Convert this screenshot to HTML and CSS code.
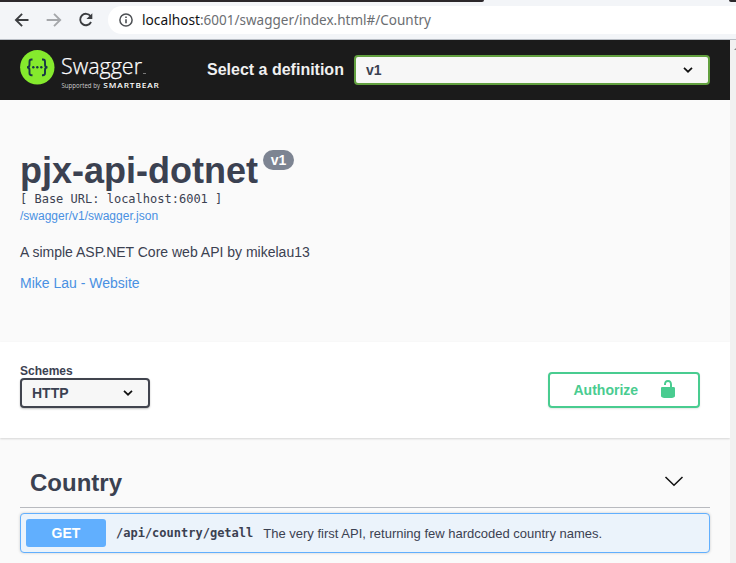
FILE: index.html
```html
<!DOCTYPE html>
<html lang="en">
<head>
<meta charset="utf-8">
<title>Swagger UI</title>
<link rel="stylesheet" href="styles.css">
</head>
<body>
<div class="tabstrip"><span class="tab-left"></span><span class="tab-right"></span></div>
<header class="toolbar">
  <svg class="nav" width="110" height="33" viewBox="0 0 110 33" fill="none" stroke-width="1.9">
    <path d="M28 16H15.500M21.500 9.700L15.200 16L21.500 22.300" stroke="#3b3d40"/>
    <path d="M46.500 16H59.500M54 9.700L60.300 16L54 22.300" stroke="#a5a7aa"/>
    <path d="M91.200 12.100A5.800 5.800 0 1 0 91.700 18" stroke="#3b3d40"/>
    <path d="M93 9V15H87Z" fill="#3b3d40"/>
  </svg>
  <div class="address">
    <svg width="14" height="14" viewBox="0 0 14 14" fill="none" stroke="#4d5054">
      <circle cx="7" cy="7" r="6.1" stroke-width="1.5"/><path d="M7 6.2V10.3M7 3.6V5.1" stroke-width="1.6"/>
    </svg>
    <svg class="url" width="400" height="28">
      <text x="0" y="19" textLength="58" lengthAdjust="spacingAndGlyphs" class="host">localhost</text>
      <text x="58" y="19" textLength="231" lengthAdjust="spacingAndGlyphs" class="path">:6001/swagger/index.html#/Country</text>
    </svg>
  </div>
</header>
<div class="viewport">
<main class="page">
  <div class="topbar">
    <svg class="logo" width="145" height="48" viewBox="0 0 145 48">
      <circle cx="17.3" cy="17.3" r="17.2" fill="#85ea2d"/>
      <g fill="none" stroke="#173647" stroke-width="1.9">
        <path d="M12.5 9.5H11.5Q9.5 9.5 9.5 11.7V14.5Q9.5 17.3 7 17.3Q9.5 17.3 9.5 20V23Q9.5 25.2 11.5 25.2H12.5"/>
        <path d="M22 9.5H23Q25 9.5 25 11.7V14.5Q25 17.3 27.5 17.3Q25 17.3 25 20V23Q25 25.2 23 25.2H22"/>
      </g>
      <g fill="#173647"><circle cx="13.3" cy="17.3" r="1.2"/><circle cx="17.3" cy="17.3" r="1.2"/><circle cx="21.3" cy="17.3" r="1.2"/></g>
      <text x="41" y="24" textLength="81" lengthAdjust="spacingAndGlyphs" class="brand">Swagger</text>
      <path d="M123 23.5H126" stroke="#777"/>
      <text x="41.5" y="38" textLength="38.5" lengthAdjust="spacingAndGlyphs" class="support">Supported by</text>
      <text x="83.3" y="38" textLength="56.500" lengthAdjust="spacingAndGlyphs" class="bear">SMARTBEAR</text>
    </svg>
    <span class="definition">Select a definition</span>
    <div class="select select-definition"><span>v1</span>
      <svg width="12" height="8" viewBox="0 0 12 8"><path d="M2 1.8L6 5.7L10 1.8"/></svg>
    </div>
  </div>
  <section class="info">
    <h1>pjx-api-dotnet<span class="version">v1</span></h1>
    <pre>[ Base URL: localhost:6001 ]</pre>
    <a class="spec">/swagger/v1/swagger.json</a>
    <p>A simple ASP.NET Core web API by mikelau13</p>
    <a class="contact">Mike Lau - Website</a>
  </section>
  <section class="schemes">
    <div><label>Schemes</label>
      <div class="select select-scheme"><span>HTTP</span>
        <svg width="12" height="8" viewBox="0 0 12 8"><path d="M2 1.8L6 5.7L10 1.8"/></svg>
      </div>
    </div>
    <div class="authorize"><span>Authorize</span>
      <svg width="20" height="20" viewBox="0 0 20 20" fill="#49cc90"><path d="M15.8 8H14V5.6C14 2.7 12.7 1 10 1 7.200 1 6 2.700 6 5.600V6h2v-.8C8 3.800 8.700 2.900 10 2.900s2 .9 2 2.300V8H4c-.6 0-1 .7-1 1.200V17c0 .5.400 1.100.9 1.300l1.200.4c.6.100 1.300.3 1.900.3h6c.6 0 1.300-.2 1.900-.3l1.200-.4c.5-.2.900-.8.900-1.300V9.200C17 8.700 16.400 8 15.800 8z"/></svg>
    </div>
  </section>
  <section class="operations">
    <div class="tag"><h2>Country</h2>
      <svg width="20" height="12" viewBox="0 0 20 12"><path d="M1.500 1L10 9.300L18.500 1" fill="none" stroke="#111" stroke-width="1.500"/></svg>
    </div>
    <div class="operation"><span class="method">GET</span><code>/api/country/getall</code><span class="summary">The very first API, returning few hardcoded country names.</span></div>
  </section>
</main>
<div class="scrollbar"><svg width="6" height="12" viewBox="0 0 6 12"><path d="M4 10L8 6V10Z" fill="#888"/></svg></div>
</div>
</body>
</html>
```
FILE: styles.css
```css
* { box-sizing: border-box; }
body { margin: 0; width: 736px; height: 563px; overflow: hidden; background: #fafafa; color: #3b4151; font-family: "Liberation Sans", sans-serif; }
svg { display: block; flex: none; }
.tabstrip { height: 2px; display: flex; justify-content: space-between; background: #f3f5f8; }
.tab-left { width: 484px; background: #2c282b; border-bottom-right-radius: 3px; }
.tab-right { width: 7px; background: #2c282b; border-bottom-left-radius: 3px; }
.toolbar { height: 38px; display: flex; align-items: flex-start; padding-top: 4px; background: #f3f5f8; border-bottom: 1px solid #b9bec5; }
.nav { width: 108px; height: 33px; margin: -2px -1px 0 1px; }
.address { flex: 1; height: 28px; display: flex; align-items: center; gap: 9px; padding-left: 11px; background: #fff; border-radius: 14px 0 0 14px; }
.url { font: 14px "Noto Sans", sans-serif; overflow: visible; }
.host { fill: #111214; }
.path { fill: #6b6e72; }
.viewport { display: flex; height: 523px; }
.page { width: 730px; }
.scrollbar { width: 6px; background: #f1f1f1; }
.topbar { height: 60px; display: flex; align-items: center; padding: 0 20px; background: #1b1b1b; }
.logo { margin-top: 8px; width: 145px; }
.brand { font: 300 22px "Open Sans", sans-serif; fill: #fff; stroke: #fff; stroke-width: .25px; }
.support { font: 7px "Open Sans", sans-serif; fill: #ccc; }
.bear { font: 600 7.500px "Open Sans", sans-serif; letter-spacing: .8px; fill: #fff; }
.definition { margin-left: 42px; width: 147px; color: #f0f0f0; font-size: 16px; font-weight: 700; white-space: nowrap; }
.select { height: 30px; display: flex; align-items: center; justify-content: space-between; padding: 0 14px 0 10px; background: #f7f7f7; border: 2px solid #41444e; border-radius: 4px; font-size: 14px; font-weight: 700; }
.select path { fill: none; stroke: #111; stroke-width: 1.700; }
.select-definition { flex: 1; border-color: #62a03f; }
.select-scheme { width: 130px; box-shadow: 0 1px 2px rgba(0,0,0,.25); }
.info { height: 242px; padding: 50px 20px 0; }
h1 { display: flex; align-items: flex-start; margin: 0; height: 41px; font-size: 36px; line-height: 41px; }
.version { height: 20px; width: 31px; margin-left: 5px; border-radius: 10px; background: #7d8492; color: #fff; font-size: 14px; line-height: 20px; text-align: center; }
pre { margin: 0; height: 17px; font: 12px/16px "DejaVu Sans Mono", monospace; }
.info a { display: block; color: #4990e2; }
.info .spec { font-size: 12px; line-height: 16px; }
.info p { margin: 20px 0 15px; font-size: 14px; line-height: 16px; }
.contact { font-size: 14px; line-height: 16px; }
.schemes { height: 96px; display: flex; justify-content: space-between; padding: 22px 30px 0 20px; background: #fff; box-shadow: 0 1px 2px rgba(0,0,0,.15); }
.schemes label { display: block; height: 14px; font-size: 12px; line-height: 14px; font-weight: 700; }
.authorize { width: 152px; height: 36px; display: flex; align-items: center; gap: 20px; margin-top: 8px; padding-left: 23.500px; border: 2px solid #49cc90; border-radius: 4px; box-shadow: 0 1px 2px rgba(0,0,0,.1); color: #49cc90; font-size: 14px; font-weight: 700; }
.authorize svg { margin-top: -2px; }
.operations { padding: 20px; }
.tag { height: 50px; display: flex; align-items: center; justify-content: space-between; padding: 0 26px 0 10px; border-bottom: 1px solid rgba(59,65,81,.35); }
.tag svg { margin-top: -1px; }
h2 { margin: 0; font-size: 24px; line-height: 28px; }
.operation { height: 40px; display: flex; align-items: center; margin-top: 5px; padding-left: 5px; border: 1px solid #61affe; border-radius: 4px; background: #ebf3fb; box-shadow: 0 0 3px rgba(0,0,0,.19); }
.method { width: 80px; height: 28px; border-radius: 3px; background: #61affe; color: #fff; font-size: 14px; line-height: 28px; font-weight: 700; text-align: center; }
code { margin-left: 10px; font: 700 12px/16px "DejaVu Sans Mono", monospace; }
.summary { margin-left: 10px; font-size: 13px; }
```
